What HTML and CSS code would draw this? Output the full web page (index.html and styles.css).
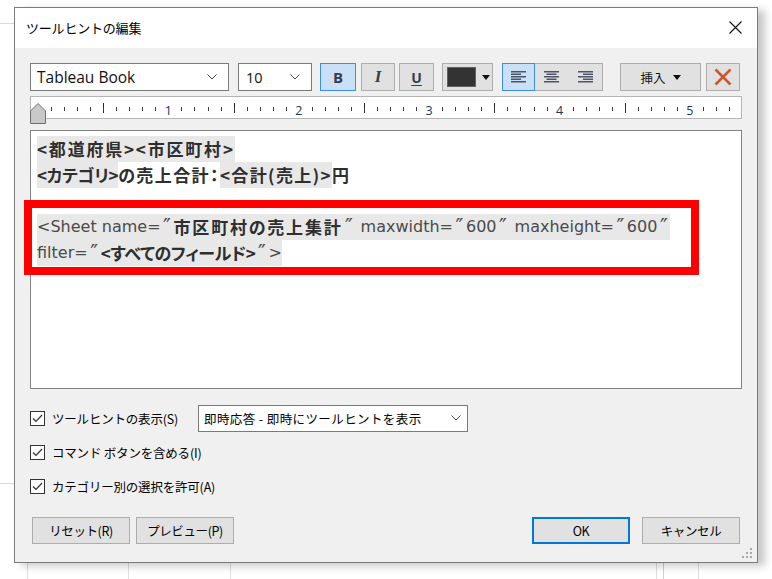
FILE: index.html
```html
<!DOCTYPE html>
<html lang="ja">
<head>
  <meta charset="UTF-8">
  <title>ツールヒントの編集</title>
  <link rel="stylesheet" href="styles.css">
</head>
<body>
  <div class="dialog">
    <div class="titlebar">
      <span class="title">ツールヒントの編集</span>
      <svg class="close" width="13" height="13" viewBox="0 0 13 13"><path d="M0.5 0.5L12.5 12.5M12.5 0.5L0.5 12.5" stroke="#111" stroke-width="1.1" fill="none"/></svg>
    </div>

    <div class="content">
      <!-- format toolbar -->
      <div class="toolbar">
        <div class="select font-sel">
          <span>Tableau Book</span>
          <svg class="chev" width="10" height="6" viewBox="0 0 10 6"><path d="M0.5 0.5L5 5L9.5 0.5" stroke="#444" fill="none"/></svg>
        </div>
        <div class="select size-sel">
          <span>10</span>
          <svg class="chev" width="10" height="6" viewBox="0 0 10 6"><path d="M0.5 0.5L5 5L9.5 0.5" stroke="#444" fill="none"/></svg>
        </div>
        <div class="btn b-bold on">B</div>
        <div class="btn b-ital">I</div>
        <div class="btn b-und">U</div>
        <div class="btn b-color"><span class="swatch"></span><span class="tri"></span></div>
        <div class="align-group">
          <div class="seg on">
            <svg width="15" height="12" viewBox="0 0 15 12"><path d="M0 0.75H15M0 3.25H10M0 5.75H15M0 8.25H10M0 10.75H15" stroke="#4a5566" stroke-width="1.3"/></svg>
          </div>
          <div class="seg">
            <svg width="15" height="12" viewBox="0 0 15 12"><path d="M0 0.75H15M2.5 3.25H12.5M0 5.75H15M2.5 8.25H12.5M0 10.75H15" stroke="#4a5566" stroke-width="1.3"/></svg>
          </div>
          <div class="seg">
            <svg width="15" height="12" viewBox="0 0 15 12"><path d="M0 0.75H15M5 3.25H15M0 5.75H15M5 8.25H15M0 10.75H15" stroke="#4a5566" stroke-width="1.3"/></svg>
          </div>
        </div>
        <div class="btn b-insert">挿入<span class="tri"></span></div>
        <div class="btn b-clear">
          <svg width="18" height="18" viewBox="0 0 18 18"><path d="M1.5 1.5L16.5 16.5M16.5 1.5L1.5 16.5" stroke="#c9582f" stroke-width="2.6" fill="none"/></svg>
        </div>
      </div>

      <!-- ruler -->
      <div class="ruler">
        <div class="ruler-nums">
          <span>1</span><span>2</span><span>3</span><span>4</span><span>5</span>
        </div>
        <svg class="indent" width="16" height="21" viewBox="0 0 16 21"><path d="M8 0.5L15.5 8V20.5H0.5V8Z" fill="#c9c9c9" stroke="#6e6e6e"/></svg>
      </div>

      <!-- tooltip body -->
      <div class="editor">
        <div class="ln"><span class="tag b">&lt;都道府県&gt;&lt;市区町村&gt;</span></div>
        <div class="ln l2"><span class="tag b kana">&lt;カテゴリ&gt;</span><span class="b">の売上合計：</span><span class="tag b">&lt;合計(売上)&gt;</span><span class="b">円</span></div>
        <div class="ln"></div>
        <div class="ln"><span class="tag"><span class="g">&lt;Sheet name=</span><span class="q">″</span><span class="b">市区町村の売上集計</span><span class="q">″</span><span class="g"> maxwidth=</span><span class="q">″</span><span class="g">600</span><span class="q">″</span><span class="g"> maxheight=</span><span class="q">″</span><span class="g">600</span><span class="q">″</span></span></div>
        <div class="ln"><span class="tag"><span class="g">filter=</span><span class="q">″</span><span class="b kana">&lt;すべてのフィールド&gt;</span><span class="q">″</span><span class="g">&gt;</span></span></div>
      </div>

      <div class="options">
        <div class="opt">
          <label class="check">
            <svg width="15" height="15" viewBox="0 0 15 15"><rect x="0.5" y="0.5" width="14" height="14" fill="#fff" stroke="#333"/><path d="M3 7.5L6 10.5L12 4" stroke="#333" stroke-width="1.2" fill="none"/></svg>
            <span>ツールヒントの表示(S)</span>
          </label>
          <div class="select mode-sel">
            <span>即時応答 - 即時にツールヒントを表示</span>
            <svg class="chev" width="10" height="6" viewBox="0 0 10 6"><path d="M0.5 0.5L5 5L9.5 0.5" stroke="#444" fill="none"/></svg>
          </div>
        </div>
        <div class="opt">
          <label class="check">
            <svg width="15" height="15" viewBox="0 0 15 15"><rect x="0.5" y="0.5" width="14" height="14" fill="#fff" stroke="#333"/><path d="M3 7.5L6 10.5L12 4" stroke="#333" stroke-width="1.2" fill="none"/></svg>
            <span>コマンド ボタンを含める(I)</span>
          </label>
        </div>
        <div class="opt">
          <label class="check">
            <svg width="15" height="15" viewBox="0 0 15 15"><rect x="0.5" y="0.5" width="14" height="14" fill="#fff" stroke="#333"/><path d="M3 7.5L6 10.5L12 4" stroke="#333" stroke-width="1.2" fill="none"/></svg>
            <span>カテゴリー別の選択を許可(A)</span>
          </label>
        </div>
      </div>

      <div class="buttons">
        <div class="btn-row">
          <button class="pbtn">リセット(R)</button>
          <button class="pbtn">プレビュー(P)</button>
        </div>
        <div class="btn-row">
          <button class="pbtn default">OK</button>
          <button class="pbtn">キャンセル</button>
        </div>
      </div>
    </div>

    <div class="highlight"></div>
    <svg class="grip" width="10" height="10" viewBox="0 0 10 10" fill="#a8a8a8"><rect x="8" y="0" width="2" height="2"/><rect x="4" y="4" width="2" height="2"/><rect x="8" y="4" width="2" height="2"/><rect x="0" y="8" width="2" height="2"/><rect x="4" y="8" width="2" height="2"/><rect x="8" y="8" width="2" height="2"/></svg>
  </div>
</body>
</html>
```

FILE: styles.css
```css
* { box-sizing: border-box; }
body {
  margin: 0;
  height: 579px;
  overflow: hidden;
  background-color: #fff;
  background-image:
    linear-gradient(#d9d9d9, #d9d9d9), linear-gradient(#d9d9d9, #d9d9d9),
    linear-gradient(#dedede, #dedede), linear-gradient(#dedede, #dedede), linear-gradient(#dedede, #dedede),
    linear-gradient(#dedede, #dedede), linear-gradient(#cfcfcf, #cfcfcf), linear-gradient(#dedede, #dedede);
  background-size: 14px 1px, 14px 1px, 1px 17px, 1px 17px, 1px 17px, 1px 17px, 1px 17px, 1px 17px;
  background-position: 0 23px, 0 483px, 27px 562px, 128px 562px, 230px 562px, 656px 562px, 663px 562px, 698px 562px;
  background-repeat: no-repeat;
  font-family: "Noto Sans CJK JP", sans-serif;
  color: #000;
}

.dialog {
  position: relative;
  margin: 7px 0 0 14px;
  width: 744px;
  height: 556px;
  border: 1px solid #7b7b7b;
  background: #f0f0f0;
  box-shadow: 7px 3px 8px rgba(0, 0, 0, 0.22);
  display: flex;
  flex-direction: column;
}

.titlebar {
  height: 40px;
  background: #fff;
  display: flex;
  align-items: center;
  justify-content: space-between;
  padding: 0 15px 0 11px;
}
.title { font-size: 13px; letter-spacing: -0.2px; margin-top: -1px; }
.close { margin-top: -2px; }

.content { padding: 15px 15px 0 15px; }

/* toolbar */
.toolbar { display: flex; height: 28px; }
.select {
  display: flex;
  align-items: center;
  justify-content: space-between;
  background: #fff;
  border: 1px solid #7a7a7a;
  height: 28px;
}
.font-sel { width: 199px; padding: 0 11px 0 6px; font-family: "Open Sans", sans-serif; font-size: 15.5px; color: #111; }
.size-sel { width: 74px; margin-left: 9px; padding: 0 11px 0 7px; font-family: "Open Sans", sans-serif; font-size: 14.5px; color: #111; }

.btn {
  height: 28px;
  background: #e1e1e1;
  border: 1px solid #adadad;
  display: flex;
  align-items: center;
  justify-content: center;
  color: #34404e;
}
.btn.on { background: #c9e0f7; border-color: #3a8ee6; }
.b-bold { width: 36px; margin-left: 8px; font: 700 15px "Open Sans", sans-serif; }
.b-ital { width: 34px; margin-left: 5px; font: italic 700 17px "Liberation Serif", serif; }
.b-und { width: 35px; margin-left: 4px; font: 700 14px "Open Sans", sans-serif; text-decoration: underline; text-underline-offset: 2px; }
.b-color { width: 51px; margin-left: 8px; justify-content: flex-start; padding-left: 4px; }
.swatch { width: 29px; height: 20px; background: #333; border: 1px solid #606060; }
.tri {
  width: 0; height: 0;
  border-left: 4.5px solid transparent;
  border-right: 4.5px solid transparent;
  border-top: 5px solid #111;
  margin-left: 6px;
}
.align-group {
  width: 101px;
  margin-left: 9px;
  display: flex;
  border: 1px solid #adadad;
  background: #e1e1e1;
}
.seg { flex: 1; display: flex; align-items: center; justify-content: center; }
.seg.on { background: #c9e0f7; outline: 1px solid #3a8ee6; outline-offset: -1px; margin: -1px 0 -1px -1px; }
.b-insert { width: 81px; margin-left: 17px; font-size: 12.5px; color: #111; }
.b-insert .tri { margin-left: 7px; }
.b-clear { width: 34px; margin-left: 5px; }

/* ruler */
.ruler {
  position: relative;
  margin-top: 5px;
  height: 23px;
  background-color: #fff;
  border: 1px solid #b4b4b4;
  background-image:
    repeating-linear-gradient(90deg, #3a3a3a 0 1px, transparent 1px 13.04px),
    repeating-linear-gradient(90deg, transparent 0 65.2px, #222 65.2px 66.2px, transparent 66.2px 130.4px);
  background-size: 100% 4px, 100% 10px;
  background-position: 7px 10px, 7px 6px;
  background-repeat: no-repeat;
}
.ruler-nums {
  display: flex;
  padding-left: 72.2px;
  height: 21px;
  align-items: center;
}
.ruler-nums span {
  width: 130.4px;
  flex: none;
  text-align: center;
  font: 12.5px "Open Sans", sans-serif;
  color: #1f3450;
  line-height: 12px;
  margin-top: 7px;
  background: linear-gradient(#fff, #fff) center / 12px 100% no-repeat;
}
.indent { position: absolute; left: -1px; top: 6px; }

/* editor */
.editor {
  margin-top: 11px;
  height: 259px;
  background: #fff;
  border: 1px solid #828282;
  padding: 5px 6px;
  font-size: 16px;
}
.ln { height: 26px; line-height: 26px; white-space: nowrap; }
.ln span { display: inline-block; vertical-align: top; white-space: pre; }
.tag { background: #e8e8e8; }
.b {
  font-size: 17px;
  font-weight: 700;
  color: #2e2e2e;
  letter-spacing: 1.8px;
  font-feature-settings: "palt";
}
.l2 .b { letter-spacing: 1.4px; }
.b.kana, .l2 .b.kana { letter-spacing: -0.3px; }
.g { font-family: "DejaVu Sans", sans-serif; color: #4a4a4a; font-size: 16px; }
.q { width: 13px; text-align: center; color: #4a4a4a; font-family: "DejaVu Sans", sans-serif; font-size: 21px; }

/* options */
.options { margin-top: 12px; }
.opt { height: 34px; display: flex; align-items: center; }
.check { display: flex; align-items: center; font-size: 12.5px; letter-spacing: -0.2px; width: 168px; }
.check svg { margin-right: 7px; flex: none; }
.check span { white-space: nowrap; }
.mode-sel { width: 270px; height: 27px; padding: 0 6px 0 5px; font-size: 12.5px; letter-spacing: 0.4px; border-color: #7a7a7a; }

.buttons { margin-top: 14px; display: flex; justify-content: space-between; padding: 0 2px; }
.btn-row { display: flex; gap: 6px; }
.btn-row + .btn-row { gap: 12px; }
.pbtn {
  width: 98px;
  height: 27px;
  background: #e1e1e1;
  border: 1px solid #adadad;
  font-family: "Noto Sans CJK JP", sans-serif;
  font-size: 12.5px;
  letter-spacing: -0.4px;
  color: #000;
  padding: 0;
}
.pbtn.default { border: 2px solid #0078d7; }

/* overlays */
.highlight {
  position: absolute;
  left: 9px;
  top: 192px;
  width: 675px;
  height: 75px;
  border: 8px solid #ff0000;
}
.grip { position: absolute; right: 5px; bottom: 4px; }
```
